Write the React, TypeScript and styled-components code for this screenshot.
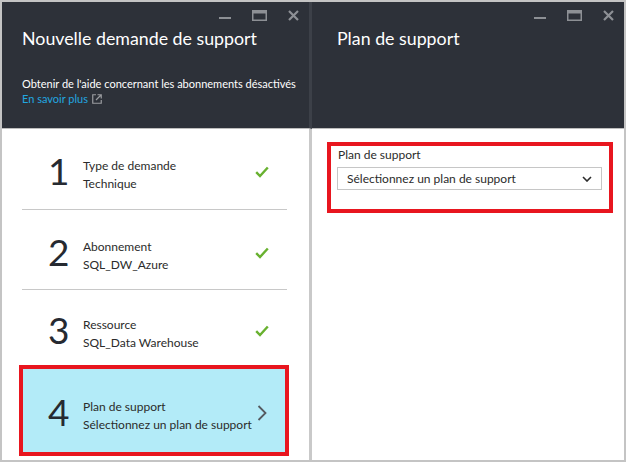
import React from 'react';
import styled, { createGlobalStyle } from 'styled-components';

const Global = createGlobalStyle`
  html, body { margin: 0; padding: 0; background: #ffffff; }
  body { font-family: Lato, "Noto Sans", sans-serif; }
`;

const Frame = styled.div`
  width: 626px;
  height: 462px;
  box-sizing: border-box;
  border: 2px solid #c4c4c4;
  display: flex;
  background: #fff;
`;

const Blade = styled.section<{ $w: number }>`
  width: ${(p) => p.$w}px;
  flex: none;
  display: flex;
  flex-direction: column;
`;

const Header = styled.header<{ $sep?: boolean; $pl: number }>`
  height: 127px;
  box-sizing: border-box;
  background: #2d3139;
  color: #ffffff;
  border-right: ${(p) => (p.$sep ? '3px solid #3c4048' : 'none')};
  border-bottom: 1px solid #bdbdbd;
  padding-left: ${(p) => p.$pl}px;
  display: flex;
  flex-direction: column;
`;

const Controls = styled.div`
  display: flex;
  justify-content: flex-end;
  align-items: flex-end;
  gap: 21px;
  height: 19px;
  padding: 0 10px 0 0;
  box-sizing: border-box;
`;

const Title = styled.h1`
  margin: 5px 0 0 0;
  font-size: 17.8px;
  line-height: 24px;
  font-weight: 400;
  color: #ffffff;
`;

const Info = styled.p`
  margin: 26px 0 0 0;
  font-size: 11px;
  line-height: 15px;
  color: #ffffff;
  white-space: nowrap;
`;

const Link = styled.span`
  color: #22a7e0;
  display: inline-flex;
  align-items: center;
  gap: 4px;
`;

const Body = styled.div<{ $sep?: boolean }>`
  flex: 1;
  background: #ffffff;
  border-right: ${(p) => (p.$sep ? '3px solid #c9c9c9' : 'none')};
  display: flex;
  flex-direction: column;
`;

const List = styled.div`
  padding: 0 22px 0 20px;
  display: flex;
  flex-direction: column;
`;

const Row = styled.div<{ $h: number; $line?: boolean; $active?: boolean }>`
  height: ${(p) => p.$h}px;
  box-sizing: border-box;
  display: grid;
  grid-template-columns: 35px 1fr auto;
  align-items: center;
  padding: ${(p) => (p.$active ? '4px 18px 0 25px' : '6px 18px 0 26px')};
  border-bottom: ${(p) => (p.$line ? '1px solid #c8c8c8' : 'none')};
  margin: ${(p) => (p.$active ? '0 -2px 0 -3px' : '0')};
  border: ${(p) => (p.$active ? '4px solid #e8161f' : undefined)};
  background: ${(p) => (p.$active ? '#b3ebf8' : 'transparent')};
`;

const Num = styled.div`
  font-size: 37px;
  line-height: 40px;
  color: #262a31;
  font-weight: 400;
  margin-top: -2px;
`;

const StepText = styled.div`
  font-size: 12px;
  line-height: 18px;
  color: #2b2b2b;
  padding-top: 6px;
`;

const RightBody = styled.div`
  padding: 13px 11px 0 15px;
`;

const Callout = styled.div`
  border: 4px solid #e8161f;
  padding: 1px 7px 19px 6px;
`;

const Label = styled.div`
  font-size: 12px;
  line-height: 16px;
  color: #2b2b2b;
  padding-left: 1px;
  margin-bottom: 4px;
`;

const Select = styled.div`
  height: 23px;
  box-sizing: border-box;
  border: 1px solid #c6c6c6;
  display: flex;
  align-items: center;
  justify-content: space-between;
  padding: 0 9px 0 9px;
  font-size: 12px;
  color: #2b2b2b;
`;

const Ctl = '#8d9095';

const MinIcon = () => (
  <svg width="12" height="3" viewBox="0 0 12 3" style={{ marginBottom: 1 }}>
    <rect x="0" y="0" width="12" height="2" fill={Ctl} />
  </svg>
);
const MaxIcon = () => (
  <svg width="15" height="11" viewBox="0 0 15 11">
    <rect x="0.75" y="0.75" width="13.5" height="9.5" fill="none" stroke={Ctl} strokeWidth="1.5" />
    <rect x="0" y="0" width="15" height="3.5" fill={Ctl} />
  </svg>
);
const CloseIcon = () => (
  <svg width="11" height="11" viewBox="0 0 11 11">
    <path d="M1 1 L10 10 M10 1 L1 10" stroke={Ctl} strokeWidth="2.2" />
  </svg>
);

const WindowControls = () => (
  <Controls>
    <MinIcon />
    <MaxIcon />
    <CloseIcon />
  </Controls>
);

const Check = () => (
  <svg width="14" height="12" viewBox="0 0 14 12">
    <path d="M1.2 6.2 L5 10 L12.8 1.5" fill="none" stroke="#68b12f" strokeWidth="2.4" />
  </svg>
);

const ChevronRight = () => (
  <svg width="10" height="16" viewBox="0 0 10 16">
    <path d="M1.5 1 L8.5 8 L1.5 15" fill="none" stroke="#555a60" strokeWidth="1.8" />
  </svg>
);

const ChevronDown = () => (
  <svg width="10" height="6" viewBox="0 0 10 6">
    <path d="M1 1 L5 5 L9 1" fill="none" stroke="#2b2b2b" strokeWidth="1.6" />
  </svg>
);

const ExternalIcon = () => (
  <svg width="10" height="10" viewBox="0 0 10 10">
    <path d="M4 0.75 H0.75 V9.25 H9.25 V6" fill="none" stroke="#9a9ca0" strokeWidth="1.2" />
    <path d="M5.5 0.75 H9.25 V4.5 M9.25 0.75 L4 6" fill="none" stroke="#9a9ca0" strokeWidth="1.2" />
  </svg>
);

type Step = { n: string; title: string; value: string; h: number; line: boolean };

const steps: Step[] = [
  { n: '1', title: 'Type de demande', value: 'Technique', h: 81, line: true },
  { n: '2', title: 'Abonnement', value: 'SQL_DW_Azure', h: 80, line: true },
  { n: '3', title: 'Ressource', value: 'SQL_Data Warehouse', h: 75, line: false },
];

export default function App() {
  return (
    <>
      <Global />
      <Frame>
        <Blade $w={310}>
          <Header $sep $pl={20}>
            <WindowControls />
            <Title>Nouvelle demande de support</Title>
            <Info>
              Obtenir de l'aide concernant les abonnements désactivés
              <br />
              <Link>
                En savoir plus <ExternalIcon />
              </Link>
            </Info>
          </Header>
          <Body $sep>
            <List>
              {steps.map((s) => (
                <Row key={s.n} $h={s.h} $line={s.line}>
                  <Num>{s.n}</Num>
                  <StepText>
                    {s.title}
                    <br />
                    {s.value}
                  </StepText>
                  <Check />
                </Row>
              ))}
              <Row $h={91} $active>
                <Num>4</Num>
                <StepText>
                  Plan de support
                  <br />
                  Sélectionnez un plan de support
                </StepText>
                <ChevronRight />
              </Row>
            </List>
          </Body>
        </Blade>
        <Blade $w={312}>
          <Header $pl={25}>
            <WindowControls />
            <Title>Plan de support</Title>
          </Header>
          <Body>
            <RightBody>
              <Callout>
                <Label>Plan de support</Label>
                <Select>
                  <span>Sélectionnez un plan de support</span>
                  <ChevronDown />
                </Select>
              </Callout>
            </RightBody>
          </Body>
        </Blade>
      </Frame>
    </>
  );
}
